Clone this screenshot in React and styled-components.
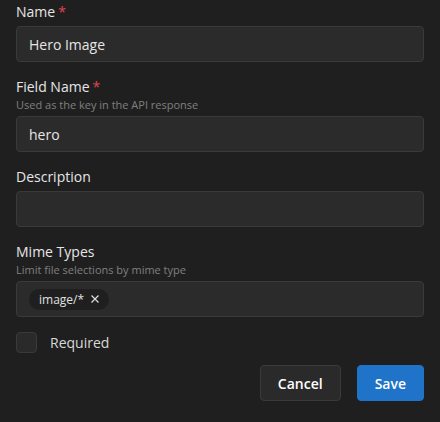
import React from 'react';
import styled, { createGlobalStyle } from 'styled-components';

const Global = createGlobalStyle`
  body { margin: 0; background: #1f1f1f; font-family: "Open Sans", "Noto Sans", sans-serif; }
`;

const Form = styled.div`
  padding: 2px 16px 16px 16px;
  display: flex;
  flex-direction: column;
`;

const Field = styled.div`
  display: flex;
  flex-direction: column;
  margin-bottom: 15px;
`;

const Label = styled.div`
  color: #e6e6e6;
  font-size: 14px;
  line-height: 20px;
  margin-bottom: ${p => (p.$hint ? '0' : '4px')};
`;

const Star = styled.span`
  color: #e0454f;
  margin-left: 3px;
`;

const Hint = styled.div`
  color: #808080;
  font-size: 11px;
  line-height: 16px;
  margin-bottom: 3px;
`;

const Input = styled.div`
  height: 36px;
  box-sizing: border-box;
  background: #2b2b2b;
  border: 1px solid #3a3a3a;
  border-radius: 4px;
  padding: 0 12px;
  display: flex;
  align-items: center;
  gap: 6px;
  color: #e6e6e6;
  font-size: 14px;
`;

const Chip = styled.span`
  background: #1f1f1f;
  border-radius: 11px;
  padding: 2px 9px 2px 10px;
  font-size: 12px;
  color: #e0e0e0;
  display: inline-flex;
  align-items: center;
  gap: 6px;
`;

const CheckRow = styled.label`
  display: flex;
  align-items: center;
  gap: 13px;
  color: #d8d8d8;
  font-size: 14px;
`;

const Box = styled.span`
  width: 19px;
  height: 19px;
  border: 1px solid #3a3a3a;
  background: #2a2a2a;
  border-radius: 4px;
`;

const Actions = styled.div`
  display: flex;
  justify-content: flex-end;
  gap: 16px;
  margin-top: 12px;
`;

const Button = styled.button`
  height: 36px;
  padding: 0 17px;
  border-radius: 4px;
  font-family: inherit;
  font-size: 14px;
  font-weight: 600;
  color: #fff;
  border: 1px solid ${p => (p.$primary ? '#1f73c8' : '#3a3a3a')};
  background: ${p => (p.$primary ? '#1f73c8' : '#2a2a2a')};
`;

export default function App() {
  return (
    <>
      <Global />
      <Form>
        <Field>
          <Label>Name<Star>*</Star></Label>
          <Input>Hero Image</Input>
        </Field>
        <Field>
          <Label $hint>Field Name<Star>*</Star></Label>
          <Hint>Used as the key in the API response</Hint>
          <Input>hero</Input>
        </Field>
        <Field>
          <Label>Description</Label>
          <Input />
        </Field>
        <Field>
          <Label $hint>Mime Types</Label>
          <Hint>Limit file selections by mime type</Hint>
          <Input>
            <Chip>image/*
              <svg width="10" height="10" viewBox="0 0 10 10"><path d="M1.5 1.5l7 7M8.5 1.5l-7 7" stroke="#ddd" strokeWidth="1.2" /></svg>
            </Chip>
          </Input>
        </Field>
        <CheckRow><Box />Required</CheckRow>
        <Actions>
          <Button>Cancel</Button>
          <Button $primary>Save</Button>
        </Actions>
      </Form>
    </>
  );
}
